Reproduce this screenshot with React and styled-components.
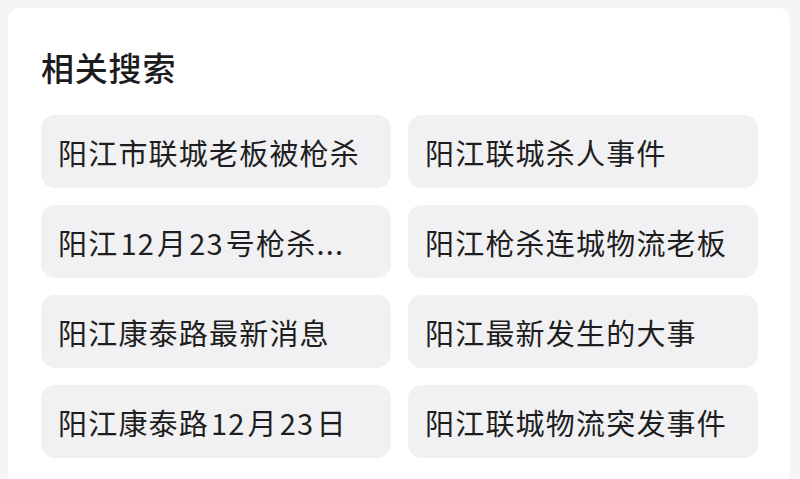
import React from "react";
import styled, { createGlobalStyle } from "styled-components";

const Global = createGlobalStyle`
  html, body { margin: 0; padding: 0; background: #f5f5f6; }
  body { font-family: "Noto Sans CJK SC", "Noto Sans", sans-serif; -webkit-font-smoothing: antialiased; }
`;

const Page = styled.div`
  padding: 8px 10px 0 8px;
`;

const Card = styled.section`
  background: #ffffff;
  border-radius: 12px;
  padding: 35px 32px 40px 33px;
`;

const Title = styled.h2`
  margin: 0 0 24px 0;
  font-size: 33px;
  line-height: 48px;
  font-weight: 500;
  color: #1c1c1e;
  letter-spacing: 0.8px;
`;

const Grid = styled.div`
  display: grid;
  grid-template-columns: 1fr 1fr;
  column-gap: 17px;
  row-gap: 17px;
`;

const Chip = styled.div`
  height: 73px;
  display: flex;
  align-items: center;
  padding: 0 18px 0 17px;
  background: #f1f1f4;
  border-radius: 14px;
  font-size: 29px;
  font-weight: 400;
  color: #1e1e20;
  white-space: nowrap;
  overflow: hidden;
  letter-spacing: 1.2px;
`;

const Num = styled.span`
  margin: 0 2px;
`;

const items = [
  ["阳江市联城老板被枪杀"],
  ["阳江联城杀人事件"],
  ["阳江", <Num key="a">12</Num>, "月", <Num key="b">23</Num>, "号枪杀..."],
  ["阳江枪杀连城物流老板"],
  ["阳江康泰路最新消息"],
  ["阳江最新发生的大事"],
  ["阳江康泰路", <Num key="a">12</Num>, "月", <Num key="b">23</Num>, "日"],
  ["阳江联城物流突发事件"],
];

export default function App() {
  return (
    <>
      <Global />
      <Page>
        <Card>
          <Title>相关搜索</Title>
          <Grid>
            {items.map((parts, i) => (
              <Chip key={i}>{parts}</Chip>
            ))}
          </Grid>
        </Card>
      </Page>
    </>
  );
}
